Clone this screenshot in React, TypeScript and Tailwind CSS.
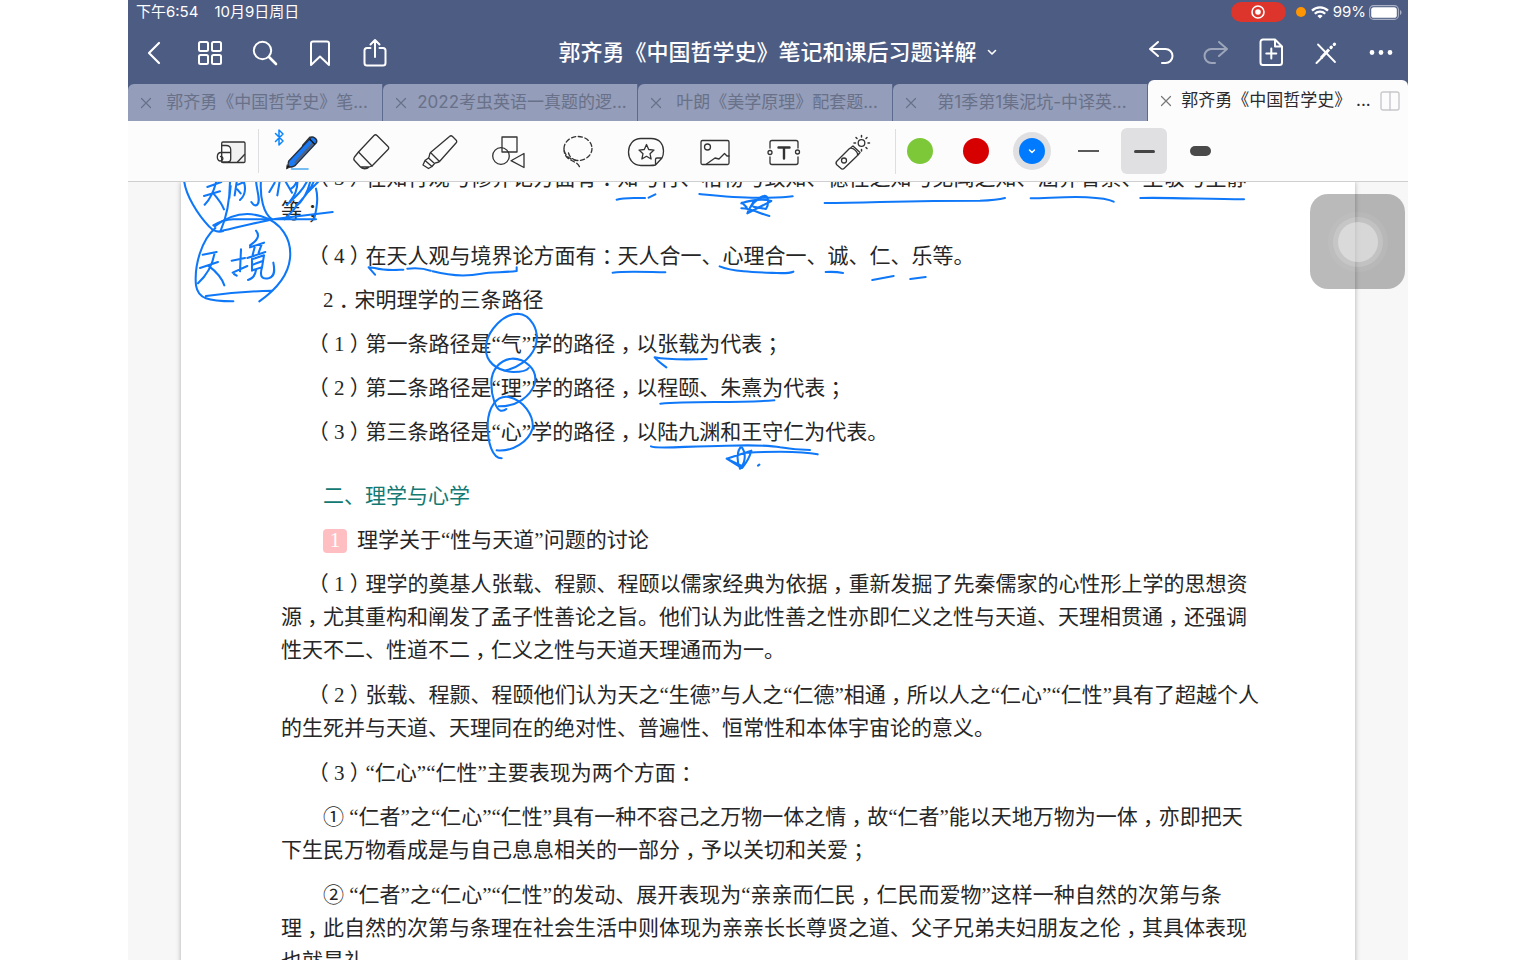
import type { ReactNode } from "react";
import clsx from "clsx";

const tabs = [
  "郭齐勇《中国哲学史》笔...",
  "2022考虫英语一真题的逻...",
  "叶朗《美学原理》配套题...",
  "第1季第1集泥坑-中译英...",
];

const strokes = {
  fill: "none",
  stroke: "currentColor",
  strokeLinecap: "round",
  strokeLinejoin: "round",
} as const;

function NavButton({ label, children, dim }: { label: string; children: ReactNode; dim?: boolean }) {
  return (
    <button aria-label={label} className={clsx("flex h-11 w-11 items-center justify-center text-white", dim && "opacity-45")}>
      <svg width="32" height="32" viewBox="0 0 32 32" strokeWidth="2" {...strokes}>
        {children}
      </svg>
    </button>
  );
}

function Tool({ label, children }: { label: string; children: ReactNode }) {
  return (
    <button aria-label={label} className="flex h-12 w-[69px] shrink-0 items-center justify-center text-[#333]">
      <svg width="48" height="48" viewBox="0 0 48 48" strokeWidth="1.3" className="overflow-visible" {...strokes}>
        {children}
      </svg>
    </button>
  );
}

// Full-width punctuation sits in the middle of its square
function Typeset({ text }: { text: string }) {
  return (
    <>
      {text.split(/([，：；（）．])/).map((part, i) =>
        i % 2 ? (
          <span key={i} className="inline-block w-[21px] text-center [font-feature-settings:'halt']">
            {part}
          </span>
        ) : (
          part
        ),
      )}
    </>
  );
}

function Para({ lines, item }: { lines: string[]; item?: boolean }) {
  return (
    <p className={clsx("whitespace-nowrap", item ? "indent-[32px]" : "indent-[42px]", lines.length > 1 ? "mb-3" : "mb-[11px]")}>
      {lines.map((line, i) => (
        <span key={i}>
          {i > 0 && <br />}
          <span className="[&>span]:indent-0">
            <Typeset text={line} />
          </span>
        </span>
      ))}
    </p>
  );
}

function StatusBar() {
  return (
    <div className="flex h-6 items-center justify-between pr-[6px] pl-2 text-[15px] leading-6 text-white">
      <div className="flex gap-4">
        <span>下午6:54</span>
        <span>10月9日周日</span>
      </div>
      <div className="flex items-center">
        <span className="mr-[10px] flex h-5 w-[55px] items-center justify-center rounded-full bg-[#dd342b]">
          <svg width="14" height="14" viewBox="0 0 14 14" aria-hidden="true">
            <circle cx="7" cy="7" r="6" fill="none" stroke="#fff" strokeWidth="1.6" />
            <circle cx="7" cy="7" r="2.8" fill="#fff" />
          </svg>
        </span>
        <span className="mr-[5px] h-[10px] w-[10px] rounded-full bg-[#ff9500]" />
        <svg width="18" height="13" viewBox="0 0 18 13" fill="none" stroke="#fff" strokeWidth="2.3" className="mr-1">
          <path d="M1 4.6a11.5 11.5 0 0 1 16 0M3.8 7.7a7.4 7.4 0 0 1 10.4 0" />
          <path d="M9 12.6 6.4 10a3.8 3.8 0 0 1 5.2 0z" fill="#fff" stroke="none" />
        </svg>
        <span className="mr-[3px]">99%</span>
        <svg width="33" height="15" viewBox="0 0 33 15">
          <rect x="0.6" y="0.6" width="28.8" height="13.8" rx="4" fill="none" stroke="#a9b1c6" strokeWidth="1.1" />
          <rect x="2.2" y="2.2" width="25.6" height="10.6" rx="2.6" fill="#fff" />
          <path d="M31 5v5c2-.8 2-4.200 0-5z" fill="#a9b1c6" />
        </svg>
      </div>
    </div>
  );
}

function NavBar() {
  return (
    <div className="grid h-14 grid-cols-[1fr_auto_1fr] items-center pr-[5px] pl-1">
      <div className="flex gap-[11px]">
        <NavButton label="返回">
          <path d="M21 7 11 17l10 10" strokeWidth="2.2" />
        </NavButton>
        <NavButton label="缩略图">
          <rect x="6" y="6" width="9" height="9" rx="1.5" />
          <rect x="19" y="6" width="9" height="9" rx="1.5" />
          <rect x="6" y="19" width="9" height="9" rx="1.5" />
          <rect x="19" y="19" width="9" height="9" rx="1.5" />
        </NavButton>
        <NavButton label="搜索">
          <circle cx="14.5" cy="14.5" r="8.7" />
          <path d="m21 21 7 7" strokeWidth="2.6" />
        </NavButton>
        <NavButton label="书签">
          <path d="M8 7.500A2 2 0 0 1 10 5.500H24a2 2 0 0 1 2 2V29l-9-8.500L8 29z" />
        </NavButton>
        <NavButton label="分享">
          <path d="M12.500 12H9a2.500 2.500 0 0 0-2.500 2.500V27A2.500 2.500 0 0 0 9 29.500H25a2.500 2.500 0 0 0 2.500-2.500V14.500A2.500 2.500 0 0 0 25 12H21.500M17 21V4M12.500 8.500 17 4l4.500 4.500" />
        </NavButton>
      </div>
      <button className="flex items-center gap-[10px] pl-5 text-[22px] font-medium whitespace-nowrap text-white">
        郭齐勇《中国哲学史》笔记和课后习题详解
        <svg width="10" height="10" viewBox="0 0 10 10" strokeWidth="1.6" {...strokes}>
          <path d="m1.500 3.500 3.500 3.500 3.500-3.500" />
        </svg>
      </button>
      <div className="flex justify-end gap-[11px]">
        <NavButton label="撤销">
          <path d="m13 6-8 7 8 7M5 13H20.500a7 7 0 0 1 0 14H17" />
        </NavButton>
        <NavButton label="重做" dim>
          <path d="m19 6 8 7-8 7M27 13H11.500a7 7 0 0 0 0 14H15" />
        </NavButton>
        <NavButton label="添加页面">
          <path d="M8 3.500H20L27 10.500V26.500a2.500 2.500 0 0 1-2.500 2.500H8A2.500 2.500 0 0 1 5.500 26.500V6A2.500 2.500 0 0 1 8 3.500zM20 3.500V10.500h7" />
          <path d="M16.300 12.500V22.500M11.300 17.500h10" />
        </NavButton>
        <NavButton label="只读模式">
          <path d="M8 8.500 25 26" strokeWidth="1.8" />
          <path d="M6.500 27 12 21.500" strokeWidth="2" />
          <path d="m11 22 8-8.500" strokeWidth="3" strokeLinecap="butt" />
          <path d="m21 11.500 .3-.3M24.300 8.300l.2-.2" strokeWidth="3.2" />
        </NavButton>
        <NavButton label="更多">
          <circle cx="7" cy="16.500" r="1.4" fill="currentColor" />
          <circle cx="16" cy="16.500" r="1.4" fill="currentColor" />
          <circle cx="25" cy="16.500" r="1.4" fill="currentColor" />
        </NavButton>
      </div>
    </div>
  );
}

function CloseButton() {
  return (
    <button aria-label="关闭标签页" className="flex h-5 w-3 shrink-0 items-center justify-center">
      <svg width="12" height="12" viewBox="0 0 12 12" strokeWidth="1.200" {...strokes}>
        <path d="m1.500 1.500 9 9M10.500 1.500l-9 9" />
      </svg>
    </button>
  );
}

function TabBar() {
  return (
    <div className="flex h-[41px] items-end text-[17px]">
      {tabs.map((tab) => (
        <div key={tab} className="flex h-[37px] min-w-0 flex-1 items-center rounded-tl-md border-r border-[#5d6a90] bg-[#949db9] pl-3 text-[#697189]">
          <CloseButton />
          <button className="min-w-0 flex-1 overflow-hidden whitespace-nowrap">{tab}</button>
        </div>
      ))}
      <div className="flex h-full w-[260px] shrink-0 items-center rounded-t-md bg-[#fcfcfd] pr-2 pl-3 text-[#2b2b2d]">
        <span className="flex text-[#777]">
          <CloseButton />
        </span>
        <button className="min-w-0 flex-1 overflow-hidden whitespace-nowrap">郭齐勇《中国哲学史》 ...</button>
        <button aria-label="分屏" className="text-[#c8c8cc]">
          <svg width="20" height="20" viewBox="0 0 20 20" strokeWidth="1.400" {...strokes}>
            <rect x="1" y="1" width="18" height="18" rx="2" />
            <path d="M10 1v18" />
          </svg>
        </button>
      </div>
    </div>
  );
}

function Toolbar() {
  return (
    <div className="flex h-[61px] items-center border-b border-[#cfcfd1] bg-[#fcfcfd] pl-[79px]">
      <button aria-label="放大窗口" className="flex h-12 w-12 shrink-0 items-center justify-center text-[#333]">
        <svg width="30" height="30" viewBox="0 0 30 30" strokeWidth="1.300" {...strokes}>
          <rect x="5.700" y="6" width="23.300" height="20.500" rx="1.200" fill="#f2f2f3" />
          <path d="M5.700 9.500H10c3 0 4.700 1.500 4.700 4V23c0 2-1 3-3 3H5.700z" fill="#fcfcfd" />
          <path d="M14 16.500H5c-5 0-4.500 8.500-1 8.500 3.500 0 4-4.500.500-4.500M21.500 26l7-7.500" />
        </svg>
      </button>
      <span className="ml-[3px] h-11 w-px shrink-0 bg-[#dedee0]" />
      <div className="ml-[7px] flex">
        <Tool label="钢笔">
          <path d="m-1.500 6.500 7.500 7.500-4 4V3l4 4-7.500 7.500" stroke="#0a84ff" strokeWidth="1.500" />
          <path d="m25.500 18.500 7.500-8.500 2.500.500" strokeWidth="1.200" />
          <path d="M11.800 34 33.500 11c1.500-3 7.500 1 6 4.500L19 37.500c-1 1.500-4 2.500-6.500 2.500-1.500-1-1.500-4-.700-6z" fill="#1a7af5" stroke="#26303f" strokeWidth="1.400" />
          <path d="m18.500 35.500 17-18.500" stroke="#51617a" strokeWidth="2.200" />
          <path d="m33 12.500 4.500 4.500" stroke="#111" />
          <path d="m10 38-.500 4 3.500-2z" fill="#111" strokeWidth=".8" />
          <path d="M14.500 42H31" stroke="#4aa8ee" strokeWidth="1.600" />
        </Tool>
        <Tool label="橡皮擦">
          <path d="M12.500 25 28 8.500c1-1 2-1 3 0L42 19.500c1 1 1 2 0 3L26 39z" />
          <path d="M12.500 25 8.500 30c-1 1.500-1 2.500 0 3.500l6 6.500h8.500l3-1M14.500 40c1.500 2.300 6.500 2.300 8.500 0" />
        </Tool>
        <Tool label="荧光笔">
          <path d="M15.500 25.500 34.500 9.500c1-1 2-1 3 0l3.500 3.500c1 1 1 2 0 3L24.500 34.500zM15.500 25.500c-1.500 1.500-.500 3.500-2 5.500l6 5.500c2-1.500 3.500-.500 5-2M13.500 31l-3.500 2.500 7 6 2.500-3M10 33.500l-2 4.500 5.500 3.500 3.500-2" />
        </Tool>
        <Tool label="形状">
          <rect x="18" y="10" width="15" height="15" />
          <circle cx="17" cy="29" r="8.300" />
          <path d="M40 26.500v14L27 33.700z" />
        </Tool>
        <Tool label="套索">
          <ellipse cx="25" cy="21.500" rx="14" ry="12" strokeDasharray="4.200 2.600" />
          <path d="M11 22c0 10 8 11 13 14.500 1.500 1.300 2.500 3 3 4.500M15.500 26c1 4 4 6.500 8 7.500" strokeDasharray="4.200 2.600" />
        </Tool>
        <Tool label="贴纸">
          <path d="M19 11.500H29c9 0 12.500 6 12.500 12.500 0 3-.500 5-1.500 7l-6.500 7c-2 .500-4 .500-6 .500h-8.500C10.500 38.500 6.500 31.500 6.500 25s4-13.500 12.500-13.500zM33.500 38v-5.500c0-1 .500-1.500 1.500-1.500h5" />
          <path d="m24.500 17.500 2.200 5 5.300.600-4 3.600 1.100 5.300-4.600-2.700-4.600 2.700 1.100-5.300-4-3.600 5.300-.600z" />
        </Tool>
        <Tool label="图片">
          <rect x="10" y="13.500" width="28" height="24" rx="1.500" />
          <circle cx="16.500" cy="20" r="3" />
          <path d="m15.500 37 8.500-6 4 1 5.500-5.500 2.500 2.500h2" />
        </Tool>
        <Tool label="文本">
          <path d="M10 21v-5.500c0-1.300.700-2 2-2h24c1.300 0 2 .700 2 2V21M10 30v5.500c0 1.300.700 2 2 2h24c1.300 0 2-.700 2-2v-5.500" />
          <circle cx="10" cy="25.500" r="2" />
          <circle cx="37.500" cy="25" r="2" />
          <path d="M18.500 20.500h11M24 20.500v11" strokeWidth="2.400" />
        </Tool>
        <Tool label="激光笔">
          <path d="M8 34 20.500 21.500c3-2 10 4.500 7.500 7.500L15.500 41c-1.500 1.500-2.500 1.500-4 0L8 38c-1.500-1.500-1.500-2.500 0-4zM22 20.500l2-1.500 7 6.500-2 2.500" />
          <circle cx="15" cy="33.500" r="2.500" />
          <circle cx="32.500" cy="16" r="3.300" />
          <path d="M32.500 8.500V10M32.500 22.500V24M25 16h1.500M39 16h1.500M27 10.500l1 1M38 10.500l-1 1M37 20.500l1 1" strokeWidth="1.500" />
        </Tool>
      </div>
      <span className="ml-2 h-[45px] w-px shrink-0 bg-[#dedee0]" />
      <div className="ml-px flex gap-[10px]">
        <button aria-label="绿色" className="flex h-[46px] w-[46px] items-center justify-center">
          <span className="h-[26px] w-[26px] rounded-full bg-[#7dc838]" />
        </button>
        <button aria-label="红色" className="flex h-[46px] w-[46px] items-center justify-center">
          <span className="h-[26px] w-[26px] rounded-full bg-[#d60000]" />
        </button>
        <button aria-label="蓝色" className="flex h-[46px] w-[46px] items-center justify-center">
          <span className="flex h-[38px] w-[38px] items-center justify-center rounded-full bg-[#e0e0e3]">
            <span className="flex h-[26px] w-[26px] items-center justify-center rounded-full bg-[#007aff] text-white">
              <svg width="8" height="8" viewBox="0 0 8 8" strokeWidth="1.500" {...strokes}>
                <path d="m1.500 3 2.500 2.500L6.500 3" />
              </svg>
            </span>
          </span>
        </button>
        <button aria-label="细" className="flex h-[46px] w-[46px] items-center justify-center">
          <span className="h-[2px] w-[21px] bg-[#5a5a5a]" />
        </button>
        <button aria-label="中" className="flex h-[46px] w-[46px] items-center justify-center rounded-md bg-[#e0e0e3]">
          <span className="h-[3px] w-[21px] rounded-full bg-[#444]" />
        </button>
        <button aria-label="粗" className="flex h-[46px] w-[46px] items-center justify-center">
          <span className="h-[10px] w-[21px] rounded-full bg-[#4a4a4a]" />
        </button>
      </div>
    </div>
  );
}

// Handwritten annotations on top of the page
function Ink() {
  return (
    <svg
      className="pointer-events-none absolute top-0 left-0 h-[778px] w-[1280px] text-[#0f78f8]"
      viewBox="128 182 1280 778"
      strokeWidth="6.200"
      aria-hidden="true"
      {...strokes}
    >
      <g transform="translate(180 178) scale(.33333)">
        <path d="M12 4C15 50 55 112 88 146c14 16 28 17 42 13M100 142c18-11 38-17 60-18H408M120 160C180 147 230 132 290 122L458 102" />
        <path d="M82 27 124 12M72 54 120 40M110 4C103 38 90 64 74 80M100 46c14 16 26 32 32 48" />
        <path d="M150 4c0 56-6 104-28 154M152 24l-4 36M170 12l-6 40M174 20l18-8c6 22 2 42-12 54M172 34l10 12M228 4c0 30 16 64 4 76-6 5-12 1-18-8M243 4c-4 56 8 104 33 120" />
        <path d="M284 14l-16 28M300 4l-8 48M314 6l22 38M330 34c14-8 20-20 20-30M352 4c2 26-8 50-22 66" />
        <path d="M384 4C368 40 342 60 320 80M402 8C388 50 354 72 342 94L314 124M408 32c8 28 2 62-6 92M376 50l38-38M392 4c-6 34-24 66-44 80" />
        <path d="M106 150C65 185 42 262 48 322c6 40 36 48 112 48M104 145c46-35 96-44 140-30 60 18 92 68 86 126-6 58-48 98-92 129M78 354c70-9 130-14 197-16" />
        <path d="M68 230l42-8M60 270l54-18M104 224c-6 36-24 68-50 92M84 262c24 18 42 38 49 60M162 288l8 5" />
        <path d="M155 248l40-8M183 214l-3 66M158 284l44-20M228 158c12 14 6 28-18 44M210 208l42-14M224 208l-6 22M246 196l-10 28M202 240l54-18M216 242v36M216 244l36-12-6 36M218 260l28-10M220 276l26-8M228 276c-2 16-12 26-24 30M246 268c-8 28 0 38 22 32 18-6 16-26 12-46" />
      </g>
      <g transform="translate(128 176) scale(.33333)">
        <path d="M741 296 722 274 740 276C775 285 800 282 826 281M838 278C865 275 885 276 908 284M914 286C960 298 1010 303 1060 293 1090 287 1130 290 1166 285V274" />
      </g>
      <g transform="translate(540 176) scale(.33333)">
        <path d="M230 71C255 63 290 67 315 66M326 65 346 55M478 54C540 60 600 66 660 65 700 65 730 66 758 61M854 81C1000 80 1100 74 1320 74 1360 73 1380 70 1395 66" />
        <path d="M688 120C660 114 640 98 604 97M604 82C640 70 670 68 694 75L622 112C630 90 650 66 674 59 688 60 686 88 678 99L640 92M606 80l14 14M624 106 640 78" />
        <path d="M218 290C260 284 320 288 376 289M539 271C580 288 650 289 710 291 735 292 750 291 760 287M857 288C875 287 895 288 909 291M997 312 1061 300M1111 309 1157 303" />
      </g>
      <g transform="translate(960 176) scale(.33333)">
        <path d="M212 67C270 66 330 61 380 64 420 66 445 69 461 77M541 66C640 64 740 70 852 70" />
      </g>
      <g transform="translate(300 300) scale(.33333)">
        <path d="M612 212C650 206 690 180 706 140 722 90 690 42 653 41 610 42 565 90 558 135 552 185 590 213 640 216 665 216 680 213 686 204" />
        <path d="M596 319C650 320 690 290 704 252 716 205 670 174 635 176 600 180 573 210 574 250 574 290 588 328 602 332 610 333 616 330 619 327" />
        <path d="M590 451C640 456 685 425 698 385 702 345 670 300 625 291 590 286 566 320 563 370 562 430 578 475 605 475" />
      </g>
      <g transform="translate(600 310) scale(.33333)">
        <path d="M199 172C180 158 170 150 164 142 200 149 260 149 320 147M181 281C280 272 400 280 523 271" />
        <path d="M153 409C170 418 260 408 380 407 460 405 510 405 540 412 580 419 610 420 630 420M653 433C600 422 520 424 440 428M420 476C408 450 412 420 424 410 440 430 436 460 420 476zM380 446 454 422C448 445 436 462 426 474zM380 446 430 470M474 467l4-3" />
      </g>
    </svg>
  );
}

function Document() {
  return (
    <main className="relative min-h-0 flex-1 overflow-hidden bg-[#f7f7f8] px-[53px]">
      <article className="min-h-full bg-white pl-[100px] font-['Liberation_Serif','Noto_Sans_CJK_SC',serif] text-[21px] leading-[33px] text-[#262626] shadow-[0_0_5px_rgba(0,0,0,0.3)]">
        <div className="-mt-5 inline-block">
          <Para
            item
            lines={["（3）在知行观与修养论方面有：知与行、格物与致知、德性之知与见闻之知、涵养省察、主敬与主静", "等；"]}
          />
          <Para item lines={["（4）在天人观与境界论方面有：天人合一、心理合一、诚、仁、乐等。"]} />
          <Para lines={["2．宋明理学的三条路径"]} />
          <Para item lines={["（1）第一条路径是“气”学的路径，以张载为代表；"]} />
          <Para item lines={["（2）第二条路径是“理”学的路径，以程颐、朱熹为代表；"]} />
          <Para item lines={["（3）第三条路径是“心”学的路径，以陆九渊和王守仁为代表。"]} />
          <h2 className="mt-[31px] mb-[11px] pl-[42px] text-[#127a72]">二、理学与心学</h2>
          <h3 className="mb-[11px] flex items-center gap-[10px] pl-[42px]">
            <span className="flex h-6 w-6 items-center justify-center rounded-sm bg-[#ffbfc2] text-white">1</span>
            理学关于“性与天道”问题的讨论
          </h3>
          <Para
            item
            lines={[
              "（1）理学的奠基人张载、程颢、程颐以儒家经典为依据，重新发掘了先秦儒家的心性形上学的思想资",
              "源，尤其重构和阐发了孟子性善论之旨。他们认为此性善之性亦即仁义之性与天道、天理相贯通，还强调",
              "性天不二、性道不二，仁义之性与天道天理通而为一。",
            ]}
          />
          <Para
            item
            lines={[
              "（2）张载、程颢、程颐他们认为天之“生德”与人之“仁德”相通，所以人之“仁心”“仁性”具有了超越个人",
              "的生死并与天道、天理同在的绝对性、普遍性、恒常性和本体宇宙论的意义。",
            ]}
          />
          <Para item lines={["（3）“仁心”“仁性”主要表现为两个方面："]} />
          <Para
            lines={[
              "① “仁者”之“仁心”“仁性”具有一种不容己之万物一体之情，故“仁者”能以天地万物为一体，亦即把天",
              "下生民万物看成是与自己息息相关的一部分，予以关切和关爱；",
            ]}
          />
          <Para
            lines={[
              "② “仁者”之“仁心”“仁性”的发动、展开表现为“亲亲而仁民，仁民而爱物”这样一种自然的次第与条",
              "理，此自然的次第与条理在社会生活中则体现为亲亲长长尊贤之道、父子兄弟夫妇朋友之伦，其具体表现",
              "也就是礼。",
            ]}
          />
        </div>
      </article>
      <Ink />
      <button
        aria-label="辅助触控"
        className="absolute top-3 right-[3px] flex h-[95px] w-[95px] items-center justify-center rounded-[18px] bg-black/27"
      >
        <span className="flex h-[60px] w-[60px] items-center justify-center rounded-full bg-white/5">
          <span className="flex h-[50px] w-[50px] items-center justify-center rounded-full bg-white/15">
            <span className="h-10 w-10 rounded-full bg-white/35" />
          </span>
        </span>
      </button>
    </main>
  );
}

export default function App() {
  return (
    <div className="h-screen bg-white font-[Inter,'Noto_Sans_CJK_SC',sans-serif]">
      <div className="mx-auto flex h-full max-w-7xl flex-col overflow-hidden">
        <header className="shrink-0 bg-[#4d5c82]">
          <StatusBar />
          <NavBar />
          <TabBar />
          <Toolbar />
        </header>
        <Document />
      </div>
    </div>
  );
}
